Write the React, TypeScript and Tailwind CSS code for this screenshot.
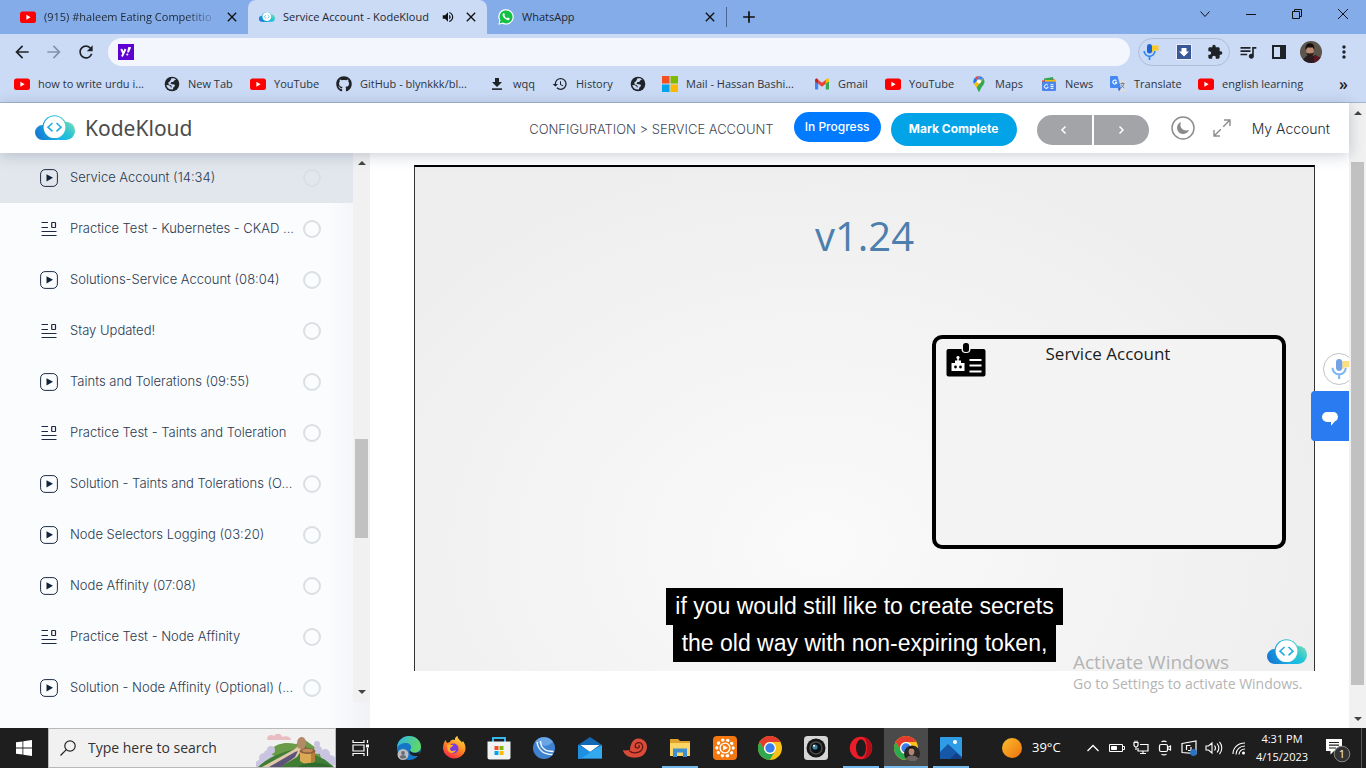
import type { ReactNode } from "react";
import {
  MdAdd,
  MdArrowBack,
  MdArrowForward,
  MdClose,
  MdExtension,
  MdHistory,
  MdMoreVert,
  MdQueueMusic,
  MdRefresh,
  MdVolumeUp,
} from "react-icons/md";
import { FaGithub } from "react-icons/fa";

function YouTubeIcon() {
  return (
    <svg viewBox="0 0 16 16" className="size-4 shrink-0">
      <rect x="0" y="2.5" width="16" height="11.5" rx="2.5" fill="#f00" />
      <path d="M6.4 5.8v5l4.2-2.5z" fill="#fff" />
    </svg>
  );
}

function GlobeIcon() {
  return (
    <svg viewBox="0 0 16 16" className="size-4 shrink-0">
      <circle cx="8" cy="8" r="7.300" fill="#1f2328" />
      <path d="M7.500 2.300c1.800-.4 3.500.2 4.500 1.200l-1.800 1-1 1.500H7.500L6.300 7.500 8 8.300l2.500.2.500 1.500-1.500 1.200-.7 2.300C6 14 3 12.300 2.300 9l2.700.2 1.700 1.300.3 1.500.8-1.200L7 9.300 4.700 8.500l-.4-2L6 5.300z" fill="#cbdbf5" />
    </svg>
  );
}

function WhatsAppIcon() {
  return (
    <svg viewBox="0 0 16 16" className="size-4 shrink-0">
      <path d="M.3 15.7 1.4 11.8A7.7 7.7 0 1 1 4.5 14.7z" fill="#fff" />
      <path d="M1.6 14.4l.9-3.1A6.5 6.5 0 1 1 4.9 13.6z" fill="#12c143" />
      <path
        d="M5.4 4.2c.3-.2.8-.1.9.2l.6 1.3c.1.3-.5.8-.5 1 .6 1.3 1.4 2 2.7 2.6.3 0 .7-.8 1-.7l1.4.7c.3.3 0 1.2-.6 1.6-.9.6-2.3.1-3.7-.8C5.600 9 4.500 7.400 4.500 6.100c0-.8.400-1.500.900-1.900z"
        fill="#fff"
      />
    </svg>
  );
}

function DownloadIcon() {
  return (
    <svg viewBox="0 0 16 16" className="size-4 shrink-0" fill="#1f2328">
      <path d="M6 2h4v4h3l-5 5-5-5h3z" />
      <rect x="3" y="12.300" width="10" height="1.600" />
    </svg>
  );
}

function MicrosoftIcon() {
  return (
    <svg viewBox="0 0 16 16" className="size-4 shrink-0">
      <rect width="7.500" height="7.500" fill="#f25022" />
      <rect x="8.500" width="7.500" height="7.500" fill="#7fba00" />
      <rect y="8.500" width="7.500" height="7.500" fill="#00a4ef" />
      <rect x="8.500" y="8.500" width="7.500" height="7.500" fill="#ffb900" />
    </svg>
  );
}

function GmailIcon() {
  return (
    <svg viewBox="0 0 16 16" className="size-4 shrink-0">
      <path d="M1 5v7.500c0 .6.400 1 1 1h2.200V6.500z" fill="#4285f4" />
      <path d="M15 5v7.500c0 .6-.400 1-1 1h-2.200V6.500z" fill="#34a853" />
      <path d="M11.800 3.800v4L15 5.400V4.200c0-1.500-1.700-2.100-2.600-1.300z" fill="#fbbc04" />
      <path d="M4.200 7.800v-4L8 6.700l3.800-2.900v4L8 10.700z" fill="#ea4335" />
      <path d="M1 4.200v1.200l3.200 2.400v-4l-.6-.9C2.700 2.100 1 2.700 1 4.200z" fill="#c5221f" />
    </svg>
  );
}

function MapsIcon() {
  return (
    <svg viewBox="0 0 16 16" className="size-4 shrink-0">
      <path d="M8 0a5.500 5.500 0 0 0-4.300 2L6.300 4.300z" fill="#ea4335" />
      <path d="M8 0a5.500 5.500 0 0 1 4.700 2.600L9.800 4.700 6.300 4.200z" fill="#4285f4" />
      <path d="M3.700 2A5.500 5.500 0 0 0 3 8l3.300-3.800z" fill="#1a73e8" />
      <path d="M3 8c.6 1.200 1.500 2 2.500 3.600L12 3.800l-4-.2z" fill="#fbbc04" />
      <path d="M5.500 11.600C6.700 13.300 7.300 16 8 16s1.300-2.700 2.500-4.400C12 9.500 13.500 8 13.500 5.500c0-1.100-.3-2-.8-2.900z" fill="#34a853" />
      <circle cx="8" cy="5.500" r="2" fill="#fff" />
    </svg>
  );
}

function NewsIcon() {
  return (
    <svg viewBox="0 0 16 16" className="size-4 shrink-0">
      <path d="M3 2.500 12 1l.8 4H3z" fill="#34a853" />
      <path d="M1 4.500 14 3.500V8H1z" fill="#ea4335" />
      <path d="M4 4h11v5H4z" fill="#fbbc04" />
      <rect x="1" y="5.500" width="14" height="9.500" rx="1.200" fill="#4a86ee" />
      <path d="M7 9.300a2 2 0 1 0 .2 2H5.600M9.500 8.700h3M9.500 10.500h3M9.500 12.300h3" fill="none" stroke="#fff" strokeWidth="1" />
    </svg>
  );
}

function TranslateIcon() {
  return (
    <svg viewBox="0 0 16 16" className="size-4 shrink-0">
      <path d="M6 4h9a1 1 0 0 1 1 1v10a1 1 0 0 1-1 1H9z" fill="#d9dde3" />
      <path d="M1 0h6.500l3.500 12H1a1 1 0 0 1-1-1V1a1 1 0 0 1 1-1z" fill="#4688f1" />
      <path d="M8 12h3l-2 3.500z" fill="#3367d6" />
      <path d="M6.500 4.800a2 2 0 1 0 .3 1.600H5" fill="none" stroke="#fff" strokeWidth="1.100" />
      <path d="M10.500 7.500h4M12.500 6.500v1M14 7.500c-.4 2-1.500 3.300-3 4.300M11.200 8.500c.6 1.600 1.800 2.700 3.200 3.500" fill="none" stroke="#66788e" strokeWidth=".9" />
    </svg>
  );
}

function KodeLogo({ id, className }: { id: string; className: string }) {
  return (
    <svg viewBox="0 0 40 26" className={className}>
      <defs>
        <linearGradient id={`${id}-a`} gradientUnits="userSpaceOnUse" x1="2" y1="22" x2="34" y2="6">
          <stop offset="0" stopColor="#1478d4" />
          <stop offset=".55" stopColor="#1cb5e0" />
          <stop offset="1" stopColor="#62d6c0" />
        </linearGradient>
        <linearGradient id={`${id}-b`} gradientUnits="userSpaceOnUse" x1="24" y1="25" x2="38" y2="9">
          <stop offset="0" stopColor="#16b4ea" />
          <stop offset=".5" stopColor="#26c4d4" />
          <stop offset="1" stopColor="#6ed9bb" />
        </linearGradient>
      </defs>
      <path d="M7.500 10H20v15H7.500a7.500 7.500 0 0 1 0-15z" fill={`url(#${id}-a)`} />
      <rect x="14" y="6.700" width="26" height="18.300" rx="9" fill={`url(#${id}-b)`} />
      <path d="M8 19h14v6H8z" fill={`url(#${id}-a)`} />
      <circle cx="19.500" cy="12.200" r="12" fill={`url(#${id}-a)`} />
      <circle cx="19.500" cy="12.200" r="10.900" fill="#fff" />
      <path d="m17.500 8-4.500 4.200 4.500 4.200M21.500 8l4.500 4.200-4.500 4.200" fill="none" stroke="#22aede" strokeWidth="1.600" />
    </svg>
  );
}

function MicIcon({ className }: { className: string }) {
  return (
    <svg viewBox="0 0 16 16" className={className}>
      <path d="M9 1.500h6.500v5H11l-2 2z" fill="#fbc926" />
      <rect x="4" y="0" width="5" height="9.500" rx="2.500" fill="#1a66d6" />
      <path d="M1.200 7a5.300 5.300 0 0 0 10.600 0M6.500 12.300V16" fill="none" stroke="#2f86ee" strokeWidth="1.700" />
    </svg>
  );
}

function Avatar({ className }: { className: string }) {
  return (
    <svg viewBox="0 0 22 22" className={className}>
      <circle cx="11" cy="11" r="11" fill="#5b554b" />
      <path d="M3 18.500a11 11 0 0 0 16.500-.6L16 14l-5 1.500-4-1z" fill="#2a1d22" />
      <path d="M14 14.500l6.800 1.700A11 11 0 0 1 14 21.500z" fill="#5d1826" />
      <ellipse cx="10" cy="9.500" rx="3.800" ry="5.200" fill="#b98a72" />
      <path d="M5.500 9C5 3.500 8 1.800 10.500 2.200c3 .2 4.300 2.600 3.600 6.800L13 6.500H7.500z" fill="#15100e" />
      <path d="M6.500 11.500c1 1.200 5.500 1.200 7 0-.2 3-1.500 4.500-3.500 4.500s-3.200-1.500-3.500-4.500z" fill="#2b1c18" />
    </svg>
  );
}

const iconMd = "size-4 shrink-0 text-[#1f2328]";

type Bookmark = { icon: ReactNode; label: string; width: string };

const bookmarks: Bookmark[] = [
  { icon: <YouTubeIcon />, label: "how to write urdu i...", width: "w-[150px]" },
  { icon: <GlobeIcon />, label: "New Tab", width: "w-[86px]" },
  { icon: <YouTubeIcon />, label: "YouTube", width: "w-[86px]" },
  { icon: <FaGithub className={iconMd} />, label: "GitHub - blynkkk/bl...", width: "w-[153px]" },
  { icon: <DownloadIcon />, label: "wqq", width: "w-[63px]" },
  { icon: <MdHistory className={iconMd} />, label: "History", width: "w-[78px]" },
  { icon: <GlobeIcon />, label: "", width: "w-8" },
  { icon: <MicrosoftIcon />, label: "Mail - Hassan Bashi...", width: "w-[152px]" },
  { icon: <GmailIcon />, label: "Gmail", width: "w-[71px]" },
  { icon: <YouTubeIcon />, label: "YouTube", width: "w-[86px]" },
  { icon: <MapsIcon />, label: "Maps", width: "w-[70px]" },
  { icon: <NewsIcon />, label: "News", width: "w-[69px]" },
  { icon: <TranslateIcon />, label: "Translate", width: "w-[88px]" },
  { icon: <YouTubeIcon />, label: "english learning", width: "w-[120px]" },
];

function TabStrip() {
  return (
    <div className="flex h-[34px] items-center bg-[#84ace9] text-[11px] text-[#1c2733]">
      <div className="flex h-full w-[248px] items-center pl-5 pr-2">
        <YouTubeIcon />
        <span className="ml-2 w-[176px] whitespace-nowrap bg-linear-to-r from-[#1c2733] from-80% to-[#84ace9] bg-clip-text text-transparent">
          (915) #haleem Eating Competitio
        </span>
        <button aria-label="Close tab" className="ml-1">
          <MdClose className="size-4 text-[#111]" />
        </button>
      </div>
      <div className="flex h-full w-[239px] items-center rounded-t-lg bg-[#cbdbf5] pl-[11px] pr-2">
        <KodeLogo id="tab" className="h-3 w-4 shrink-0" />
        <span className="ml-2 w-[154px] whitespace-nowrap">Service Account - KodeKloud</span>
        <MdVolumeUp className="ml-1 size-3.5 shrink-0 text-[#111]" />
        <button aria-label="Close tab" className="ml-auto">
          <MdClose className="size-4 text-[#111]" />
        </button>
      </div>
      <div className="flex h-full w-[239px] items-center pl-[11px] pr-2">
        <WhatsAppIcon />
        <span className="ml-2">WhatsApp</span>
        <button aria-label="Close tab" className="ml-auto">
          <MdClose className="size-4 text-[#111]" />
        </button>
      </div>
      <span className="h-5 w-px bg-[#4a6690]" />
      <button aria-label="New tab" className="ml-3">
        <MdAdd className="size-5 text-[#111]" />
      </button>
      <div className="ml-auto flex h-7 self-start">
        <button aria-label="Search tabs" className="flex w-[46px] items-center justify-center">
          <svg viewBox="0 0 10 10" className="size-2.5" fill="none" stroke="#111">
            <path d="m.5 2.500 4.500 5 4.500-5" />
          </svg>
        </button>
        <button aria-label="Minimize" className="flex w-[46px] items-center justify-center">
          <svg viewBox="0 0 10 10" className="size-2.5" stroke="#111">
            <path d="M0 5.500h10" />
          </svg>
        </button>
        <button aria-label="Restore" className="flex w-[46px] items-center justify-center">
          <svg viewBox="0 0 10 10" className="size-2.5" fill="none" stroke="#111">
            <path d="M.5 2.500h7v7h-7zM2.500 2.500v-2h7v7h-2" />
          </svg>
        </button>
        <button aria-label="Close window" className="flex w-[46px] items-center justify-center">
          <svg viewBox="0 0 10 10" className="size-2.5" stroke="#111">
            <path d="m0 0 10 10M10 0 0 10" />
          </svg>
        </button>
      </div>
    </div>
  );
}

function Toolbar() {
  return (
    <div className="flex h-9 items-center bg-[#cbdbf5]">
      <button aria-label="Back" className="ml-3">
        <MdArrowBack className="size-5 text-[#1f2328]" />
      </button>
      <button aria-label="Forward" className="ml-3">
        <MdArrowForward className="size-5 text-[#8493ad]" />
      </button>
      <button aria-label="Reload" className="ml-3">
        <MdRefresh className="size-5 text-[#1f2328]" />
      </button>
      <div className="ml-3 flex h-7 flex-1 items-center rounded-full bg-[#f3f7fd] px-2.5">
        <svg viewBox="0 0 16 16" className="size-4 shrink-0">
          <rect width="16" height="16" fill="#5f01d1" />
          <path d="m3.200 5 2.200 4.500L7.500 5M5.500 9.200l-1.500 3.300" fill="none" stroke="#fff" strokeWidth="1.900" />
          <path d="m10.300 3 2.900.2-2.300 5.300-1.800-.2z" fill="#fff" />
          <circle cx="9.300" cy="10.500" r="1.100" fill="#fff" />
        </svg>
        <input aria-label="Address" className="ml-2 h-6 min-w-0 flex-1 bg-transparent text-sm outline-none" />
      </div>
      <div className="ml-2 flex h-7 w-[92px] items-center justify-between rounded-full border border-[#aebdd8] pl-1 pr-1.5">
        <button aria-label="Voice typing">
          <MicIcon className="size-4" />
        </button>
        <button aria-label="Video downloader" className="ml-0.5">
          <svg viewBox="0 0 16 16" className="size-4">
            <rect x=".5" y=".5" width="15" height="15" fill="#3a5797" stroke="#e8eefa" />
            <path d="M5.500 4h5v3.500H13l-5 5-5-5h2.500z" fill="#fff" />
          </svg>
        </button>
        <button aria-label="Extensions">
          <MdExtension className="size-4 text-[#1f2328]" />
        </button>
      </div>
      <button aria-label="Media controls" className="ml-2">
        <MdQueueMusic className="size-5 text-[#1f2328]" />
      </button>
      <button aria-label="Side panel" className="ml-3.5">
        <svg viewBox="0 0 14 14" className="size-3.5">
          <rect x="1" y="1" width="12" height="12" fill="none" stroke="#1f2328" strokeWidth="2" />
          <rect x="8" y="1" width="5" height="12" fill="#1f2328" />
        </svg>
      </button>
      <button aria-label="Profile" className="ml-3.5">
        <Avatar className="size-[22px]" />
      </button>
      <button aria-label="Menu" className="ml-3 mr-3">
        <MdMoreVert className="size-5 text-[#1f2328]" />
      </button>
    </div>
  );
}

function BookmarkBar() {
  return (
    <nav className="flex h-[33px] items-center overflow-hidden border-b border-[#a3b3cf] bg-[#cbdbf5] pb-1 pl-3.5 text-[11px] text-[#2b3440]">
      {bookmarks.map((b, i) => (
        <a
          key={i}
          href="#bookmark"
          aria-label={b.label || "Bookmark"}
          className={`flex shrink-0 items-center gap-2 whitespace-nowrap ${b.width}`}
        >
          {b.icon}
          {b.label}
        </a>
      ))}
      <button aria-label="More bookmarks" className="ml-auto mr-[18px] text-base leading-none font-semibold text-[#1f2328]">
        »
      </button>
    </nav>
  );
}

function PageHeader() {
  return (
    <header className="relative z-10 flex h-[50px] shrink-0 items-center bg-white shadow-[0_2px_14px_rgba(40,55,90,0.25)]">
      <a href="#home" className="ml-[35px] flex items-center gap-2.5">
        <KodeLogo id="head" className="h-[26px] w-10" />
        <span className="font-['Noto_Sans',sans-serif] text-[21px] leading-6 text-[#4b4b4b]">KodeKloud</span>
      </a>
      <span className="ml-auto mt-1 text-[13px] font-light whitespace-nowrap text-[#3f4854]">
        CONFIGURATION &gt; SERVICE ACCOUNT
      </span>
      <button className="mb-0.5 ml-5 h-[30px] w-[87px] rounded-full bg-[#007bff] text-xs font-medium text-white">
        In Progress
      </button>
      <button className="ml-2.5 mt-0.5 h-[33px] w-[126px] rounded-full bg-[#03a3e8] text-xs font-bold text-white">
        Mark Complete
      </button>
      <div className="ml-5 mt-1 flex gap-0.5">
        <button aria-label="Previous" className="flex h-[30px] w-[55px] items-center justify-center rounded-l-full bg-[#a3a4a8]">
          <svg viewBox="0 0 8 10" className="h-2.5 w-2" fill="none" stroke="#fff" strokeWidth="1.500">
            <path d="M5.500 1.500 2 5l3.500 3.500" />
          </svg>
        </button>
        <button aria-label="Next" className="flex h-[30px] w-[55px] items-center justify-center rounded-r-full bg-[#a3a4a8]">
          <svg viewBox="0 0 8 10" className="h-2.5 w-2" fill="none" stroke="#fff" strokeWidth="1.500">
            <path d="M2.500 1.500 6 5 2.500 8.500" />
          </svg>
        </button>
      </div>
      <button aria-label="Dark mode" className="ml-[22px]">
        <svg viewBox="0 0 24 24" className="size-6">
          <circle cx="12" cy="12" r="11" fill="#fff" stroke="#8d8d8d" strokeWidth="1.500" />
          <path d="M10 6a6.200 6.200 0 1 0 8 8c-3 1-5.500.3-7-1.200C9.300 11.200 9 8.500 10 6z" fill="#8a8a8c" />
        </svg>
      </button>
      <button aria-label="Full screen" className="ml-[18px]">
        <svg viewBox="0 0 18 18" className="size-[18px]" fill="none" stroke="#8d8d8d" strokeWidth="1.400">
          <path d="M11 1h6v6M17 1l-6.800 6.800M7 17H1v-6M1 17l6.800-6.800" />
        </svg>
      </button>
      <a href="#account" className="ml-[21px] mr-[19px] mt-0.5 text-sm font-light whitespace-nowrap text-[#222b38]">
        My Account
      </a>
    </header>
  );
}

type Lesson = { kind: "video" | "text"; title: string };

const lessons: Lesson[] = [
  { kind: "video", title: "Service Account (14:34)" },
  { kind: "text", title: "Practice Test - Kubernetes - CKAD ..." },
  { kind: "video", title: "Solutions-Service Account (08:04)" },
  { kind: "text", title: "Stay Updated!" },
  { kind: "video", title: "Taints and Tolerations (09:55)" },
  { kind: "text", title: "Practice Test - Taints and Toleration" },
  { kind: "video", title: "Solution - Taints and Tolerations (O..." },
  { kind: "video", title: "Node Selectors Logging (03:20)" },
  { kind: "video", title: "Node Affinity (07:08)" },
  { kind: "text", title: "Practice Test - Node Affinity" },
  { kind: "video", title: "Solution - Node Affinity (Optional) (..." },
];

function LessonIcon({ kind }: { kind: Lesson["kind"] }) {
  return kind === "video" ? (
    <svg viewBox="0 0 18 18" className="size-[18px] shrink-0">
      <rect x=".6" y=".6" width="16.800" height="16.800" rx="4.500" fill="none" stroke="#1d2b42" strokeWidth="1" />
      <path d="M6.500 5.200v7.200L13 8.800z" fill="#14233c" />
    </svg>
  ) : (
    <svg viewBox="0 0 18 18" className="size-[18px] shrink-0" fill="none" stroke="#1d2b42" strokeWidth="1.200">
      <path d="M1.500 2.500H8M1.500 7.500H8M1.500 11.500h15M1.500 15.500h15" />
      <rect x="11.700" y="2.500" width="3.800" height="5" rx=".5" />
    </svg>
  );
}

function ScrollArrow({ down = false }: { down?: boolean }) {
  return (
    <svg viewBox="0 0 8 4" className="h-1 w-2" fill="#444">
      <path d={down ? "M0 0h8L4 4z" : "M0 4h8L4 0z"} />
    </svg>
  );
}

function Sidebar() {
  return (
    <aside className="flex w-[370px] shrink-0 items-start overflow-hidden bg-[linear-gradient(to_right,#fafcfe_88%,#f0f2f5)]">
      <ul className="min-w-0 flex-1">
        {lessons.map((lesson, i) => (
          <li
            key={lesson.title}
            className={
              i === 0
                ? "flex h-[50px] items-center bg-[#e2e7ed] pl-10 pr-8"
                : "flex h-[51px] items-center pl-10 pr-8"
            }
          >
            <LessonIcon kind={lesson.kind} />
            <a href="#lesson" className="ml-3 truncate text-[13px] font-light text-[#2b394f]">
              {lesson.title}
            </a>
            <input
              type="checkbox"
              aria-label={`Mark ${lesson.title} complete`}
              className="ml-auto size-[18px] shrink-0 appearance-none rounded-full border-2 border-[#dcdfe2]"
            />
          </li>
        ))}
      </ul>
      <div className="flex h-[549px] w-[17px] shrink-0 flex-col items-center bg-[#f1f1f1] py-2">
        <ScrollArrow />
        <div className="mt-[274px] h-[99px] w-[13px] bg-[#c1c1c1]" />
        <div className="mt-auto">
          <ScrollArrow down />
        </div>
      </div>
    </aside>
  );
}

function Slide() {
  return (
    <div className="relative flex aspect-[901/506] flex-col border-x border-t-2 border-x-[#333] border-t-black bg-[radial-gradient(ellipse_at_45%_75%,#fafafa,#eeeeee_75%)] font-['Open_Sans',sans-serif]">
      <h1 className="mt-[46px] text-center text-[40px] leading-[46px] text-[#4d7fac]">v1.24</h1>
      <div className="mr-7 mt-[76px] flex h-[214px] w-[354px] items-start self-end rounded-[10px] border-4 border-black bg-[#f3f3f3]">
        <svg viewBox="0 0 40 34" className="ml-2.5 mt-1 h-[34px] w-10 shrink-0">
          <rect x=".5" y="6" width="39" height="27.500" rx="2" fill="#000" />
          <rect x="15.500" y="-1" width="9" height="11" rx="4" fill="#f4f4f4" />
          <rect x="17" y="0" width="6" height="9" rx="2.500" fill="#000" />
          <path d="M5.500 20h13v8h-13zM9 17.500h6V21H9zM11.300 13.500h1.500v5h-1.500z" fill="#fff" />
          <circle cx="12" cy="14.500" r="1.600" fill="#fff" />
          <circle cx="9.500" cy="24" r="1.400" fill="#000" />
          <circle cx="14.500" cy="24" r="1.400" fill="#000" />
          <path d="M23.500 17h12M23.500 22.500h12M23.500 28.500h12" stroke="#fff" strokeWidth="1.800" />
        </svg>
        <h2 className="mt-[3px] flex-1 pr-[52px] text-center text-[17px] leading-6 text-[#1b1b1b]">Service Account</h2>
      </div>
      <div className="absolute inset-x-0 bottom-[9px] flex flex-col items-center font-['Liberation_Sans',Arial,sans-serif] text-[23px] leading-[37px] text-white">
        <span className="bg-black px-[9px]">if you would still like to create secrets</span>
        <span className="bg-black px-[9px]">the old way with non-expiring token,</span>
      </div>
      <KodeLogo id="slide" className="absolute bottom-1.5 right-[7px] h-[26px] w-10" />
      <div className="absolute right-1 top-[483px] w-[237px] whitespace-nowrap text-[#b4b4b4]">
        <p className="text-[19px] leading-6">Activate Windows</p>
        <p className="text-sm leading-5">Go to Settings to activate Windows.</p>
      </div>
    </div>
  );
}

function Page() {
  return (
    <div className="relative flex min-w-0 flex-1 flex-col bg-white">
      <PageHeader />
      <div className="flex min-h-0 flex-1">
        <Sidebar />
        <main className="min-w-0 flex-1 pl-11 pr-[34px] pt-3">
          <Slide />
        </main>
      </div>
      <div className="absolute right-0 top-[250px] flex flex-col items-end overflow-hidden">
        <button
          aria-label="Voice input"
          className="-mr-1.5 flex size-8 items-center justify-center rounded-full border border-[#c4c4c4] bg-white pl-1"
        >
          <MicIcon className="size-5 opacity-60" />
        </button>
        <button aria-label="Chat" className="mt-1.5 flex h-[50px] w-[38px] items-center justify-center rounded-l bg-[#2a7af2]">
          <svg viewBox="0 0 16 14" className="mt-1.5 h-3.5 w-4" fill="#fff">
            <path d="M5 0h6a4.800 4.800 0 0 1 2 9.200L9 13.800V10H5A5 5 0 0 1 5 0z" />
          </svg>
        </button>
      </div>
    </div>
  );
}

function PageScrollbar() {
  return (
    <div className="flex w-[17px] shrink-0 flex-col items-center bg-[#f1f1f1] pb-[7px] pt-2">
      <ScrollArrow />
      <div className="mb-8 mt-[47px] w-[13px] flex-1 bg-[#c1c1c1]" />
      <ScrollArrow down />
    </div>
  );
}

function WallArt() {
  return (
    <svg viewBox="0 0 79 36" className="h-9 w-[79px] shrink-0 self-end">
      <path d="M11 8c0-4 5-5 7-3 3-4 8-2 8 1 4-2 9 0 9 3H12z" fill="#e8bcc0" />
      <path d="M14 19c8-7 15-8 26-6l9-4 14 10 4 14H8z" fill="#6b9a48" />
      <g fill="#c9c4e0">
        <circle cx="8" cy="27" r="5" />
        <circle cx="15" cy="19" r="4" />
        <circle cx="4" cy="34" r="5" />
        <circle cx="12" cy="23" r="4" />
        <circle cx="16" cy="28" r="4" />
        <circle cx="62" cy="19" r="4" />
        <circle cx="69" cy="23" r="5" />
        <circle cx="74" cy="30" r="6" />
        <circle cx="61" cy="13" r="3" />
      </g>
      <path d="M2 36c10-9 18-13 34-17l12-6 6 9 14 6 10 8z" fill="#3f7d35" />
      <path d="M6 36 37 19l7-5 3 3-6 9-17 10z" fill="#e0c8a8" />
      <path d="M13 36 39 21l3-1-3 6-14 10z" fill="#5c5478" />
      <path d="M41 13c0-5 2-7 5-7s4 4 4 7l-2 6-6-2z" fill="#b38a68" />
      <path d="M44 20h15v10c-4 4-11 4-15 0z" fill="#dba855" />
      <path d="M55 19h4v11l-4 2z" fill="#b87f3c" />
      <ellipse cx="51.500" cy="20" rx="8" ry="3" fill="#8d5f3d" />
      <ellipse cx="51.500" cy="19.500" rx="5.500" ry="1.800" fill="#c28c59" />
      <path d="M42 36c6-5 24-6 34 0z" fill="#2f6b2d" />
    </svg>
  );
}

function ChromeIcon({ className, children }: { className: string; children?: ReactNode }) {
  return (
    <svg viewBox="0 0 24 24" className={className}>
      <circle cx="12" cy="12" r="12" fill="#fbc116" />
      <path d="M1.600 6A12 12 0 0 1 22.400 6H12a6 6 0 0 0-5.200 9z" fill="#e33b2e" />
      <path d="M1.600 6a12 12 0 0 0 10.200 18l5.400-9a6 6 0 0 1-10.400 0z" fill="#2da94f" />
      <circle cx="12" cy="12" r="6" fill="#fff" />
      <circle cx="12" cy="12" r="4.700" fill="#3b7ded" />
      {children}
    </svg>
  );
}

type TaskApp = { name: string; icon: ReactNode; state?: "open" | "active" };

const taskIcon = "size-6";

const apps: TaskApp[] = [
  {
    name: "Edge",
    icon: (
      <svg viewBox="0 0 24 24" className={taskIcon}>
        <defs>
          <linearGradient id="edge" x1="0" y1="0" x2="1" y2=".3">
            <stop offset="0" stopColor="#2fb5e8" />
            <stop offset="1" stopColor="#5fd669" />
          </linearGradient>
        </defs>
        <circle cx="12" cy="12" r="12" fill="#1676c6" />
        <path d="M0 11.500C.5 4.500 6 0 12 0c7 0 12 5 12 10.500 0 4-3 6-6.500 6-3 0-4.500-1.300-4.500-2.300 0-.8 1.200-1.200 1.200-3 0-2-2-4.200-5.500-4.200C5 7 1.500 8.700 0 11.500z" fill="url(#edge)" />
        <path d="M13 14.200c0 1 1.500 2.800 5 2.800 2 0 4-1 5-2l-1 5c-5 .5-11-1-9-5.800z" fill="#1e1e1e" />
        <circle cx="6" cy="18.500" r="5.500" fill="#b9bcc0" />
        <circle cx="6" cy="17" r="1.900" fill="#6a6d71" />
        <path d="M2.800 21.500c.4-3.200 6-3.200 6.400 0-1.600 1.500-4.800 1.500-6.400 0z" fill="#6a6d71" />
      </svg>
    ),
  },
  {
    name: "Firefox",
    icon: (
      <svg viewBox="0 0 24 24" className={taskIcon}>
        <defs>
          <linearGradient id="fox" x1=".8" y1="0" x2=".3" y2="1">
            <stop offset="0" stopColor="#ffe14b" />
            <stop offset=".5" stopColor="#ff8a1e" />
            <stop offset="1" stopColor="#f5254e" />
          </linearGradient>
        </defs>
        <path d="M1 13c0-4 1-7 2.500-9l1.500 3 3-1c1-3 4-2 5-2-.5-2 1-3.500 2.500-4 0 3 3 4 4.500 6.500L21 5c2 3 3 6 2.300 9.500A11.500 11.500 0 0 1 1 13z" fill="url(#fox)" />
        <circle cx="11.500" cy="12.500" r="5" fill="#7a3be0" />
        <path d="M5 9c2-1.500 4 .5 6.500 0-1 2-3.500 2-3.500 4 0 2 3 3 6 1-1.500 4-7 4-8.500 0z" fill="#ffb12b" />
      </svg>
    ),
  },
  {
    name: "Store",
    icon: (
      <svg viewBox="0 0 24 24" className={taskIcon}>
        <path d="M6 6V2h12v4" fill="none" stroke="#38b6ee" strokeWidth="2" />
        <path d="M.5 5.500h23v16a2 2 0 0 1-2 2h-19a2 2 0 0 1-2-2z" fill="#f0f2f4" />
        <path d="M7.500 10h4v4h-4z" fill="#f25022" />
        <path d="M12.500 10h4v4h-4z" fill="#7fba00" />
        <path d="M7.500 15h4v4h-4z" fill="#00a4ef" />
        <path d="M12.500 15h4v4h-4z" fill="#ffb900" />
      </svg>
    ),
  },
  {
    name: "Connect",
    icon: (
      <svg viewBox="0 0 24 24" className={taskIcon}>
        <circle cx="12" cy="12" r="11" fill="#3f83d0" />
        <path d="M3 6a11 11 0 0 1 18 0 16 16 0 0 1-8 4z" fill="#6aa5e6" />
        <path d="M5 6c1 7 6 12.500 15.500 12.500M8.500 5c0 6 4 10.500 13 10.500" fill="none" stroke="#f2f8ff" strokeWidth="1.500" />
      </svg>
    ),
  },
  {
    name: "Mail",
    icon: (
      <svg viewBox="0 0 24 24" className={taskIcon}>
        <path d="M0 9 12 1l12 8v13.500H0z" fill="#1467b3" />
        <path d="M2.500 9h19L12 16z" fill="#fff" />
        <path d="m0 9 12 7L24 9v13.500H0z" fill="#33aaf0" />
        <path d="M0 9v13.500h3L16 14l-4 2z" fill="#1f8fe0" />
      </svg>
    ),
  },
  {
    name: "Nautilus",
    icon: (
      <svg viewBox="0 0 24 24" className={taskIcon}>
        <path d="M0 14c2 1 4 0 7 .5C7 7 11 2 16 2.500c5 .5 8 4 8 8.500-.5 6.500-5 10.500-11 10.500C6 22 1 19 0 14z" fill="#db4a38" />
        <path d="M6.500 15c3 3 10 2.500 12.500-1.500 2-4-.5-7.500-4-6.800-3.500.8-3.800 4.800-1 5.300 2.300.3 3.200-2 1.500-2.800" fill="none" stroke="#5a1712" strokeWidth="1.200" />
      </svg>
    ),
  },
  {
    name: "File Explorer",
    state: "open",
    icon: (
      <svg viewBox="0 0 24 24" className={taskIcon}>
        <path d="M2 3h8l2 2h10v5H2z" fill="#e0a22c" />
        <path d="M2 7h20v13H2z" fill="#fbd566" />
        <path d="M5 21v-8.500h14V21h-4v-4.500H9V21z" fill="#3d8fd0" />
      </svg>
    ),
  },
  {
    name: "Photo studio",
    icon: (
      <svg viewBox="0 0 24 24" className={taskIcon}>
        <rect width="24" height="24" rx="4" fill="#f4780f" />
        <circle cx="12" cy="12" r="8" fill="none" stroke="#fff" strokeWidth="3.600" strokeLinecap="round" strokeDasharray="0 5.026" />
        <circle cx="12" cy="12" r="6.400" fill="none" stroke="#f4780f" strokeWidth=".8" />
        <circle cx="12" cy="12" r="5.600" fill="#fff" />
        <circle cx="12" cy="12" r="4.200" fill="#f4780f" />
        <path d="M10 9v5.600l5-2.800z" fill="#fff" />
      </svg>
    ),
  },
  { name: "Chrome", icon: <ChromeIcon className={taskIcon} /> },
  {
    name: "Camera",
    icon: (
      <svg viewBox="0 0 24 24" className={taskIcon}>
        <rect width="24" height="24" rx="3.500" fill="#d6d6d6" />
        <circle cx="12" cy="12" r="9.500" fill="#161616" />
        <circle cx="12" cy="12" r="6.800" fill="#4a4a4e" />
        <circle cx="12" cy="12" r="5.200" fill="#0a0f16" />
        <circle cx="11" cy="11" r="2.600" fill="#3f7f9b" />
        <circle cx="10" cy="9.800" r="1" fill="#fff" />
      </svg>
    ),
  },
  {
    name: "Opera",
    state: "open",
    icon: (
      <svg viewBox="0 0 24 24" className={taskIcon}>
        <circle cx="12" cy="12" r="11.200" fill="#ee1c28" />
        <path d="M14 1a11.200 11.200 0 0 1 0 22c5-3 6-19 0-22z" fill="#b00f1a" />
        <ellipse cx="12" cy="12" rx="5" ry="8.800" fill="#1e1e1e" />
      </svg>
    ),
  },
  {
    name: "Chrome profile",
    state: "active",
    icon: (
      <ChromeIcon className="size-6 overflow-visible">
        <circle cx="18" cy="17.500" r="8" fill="#2c2725" />
        <ellipse cx="17.500" cy="15.500" rx="2.800" ry="3.800" fill="#b08672" />
        <path d="M14.500 14c0-4.500 6-4.500 6 0l-1-1.500h-4z" fill="#0f0c0b" />
        <path d="M12 22.500c2-4 10-4 12.500 0a8 8 0 0 1-12.500 0z" fill="#6b6462" />
      </ChromeIcon>
    ),
  },
  {
    name: "Photos",
    state: "open",
    icon: (
      <svg viewBox="0 0 22 22" className="size-[22px]">
        <rect width="22" height="22" rx="1" fill="#2f9ce8" />
        <path d="m0 15 8-8 14 13v2H0z" fill="#1558a8" />
        <path d="m10 22 6-6 6 5v1z" fill="#123f86" />
        <circle cx="15" cy="5" r="2" fill="#fff" />
      </svg>
    ),
  },
];

function Tray() {
  const cls = "size-4 shrink-0";
  return (
    <div className="flex items-center gap-2" aria-hidden="true">
      <svg viewBox="0 0 16 16" className={cls} fill="none" stroke="#fff" strokeWidth="1.300">
        <path d="m2.500 11 5.500-5.500 5.500 5.500" />
      </svg>
      <svg viewBox="0 0 16 16" className={cls} fill="none" stroke="#fff">
        <path d="M.5 4.500h13v7H.5zM14 6.500h1.500v3H14" />
        <path d="M2.500 6.500h5v3h-5z" fill="#fff" />
      </svg>
      <svg viewBox="0 0 16 16" className={cls} fill="none" stroke="#fff" strokeWidth="1.200">
        <path d="M7 4.500h8v6.500H5V8M10 11v2.500M7 13.500h6M1 2.500V5c0 1 1 2 2 2s2-1 2-2V2.500zM2 2.500V.8M4 2.500V.8M3 7v3" />
      </svg>
      <svg viewBox="0 0 16 16" className={cls} fill="none" stroke="#fff" strokeWidth="1.200">
        <rect x="2.500" y="4.500" width="8" height="7" rx="1.500" />
        <path d="m10.500 7.500 3-1.500v4l-3-1.500M4.500 1.800c1.500-.8 3.500-.8 5 0M4.500 14.200c1.500.8 3.500.8 5 0" />
      </svg>
      <svg viewBox="0 0 16 16" className={cls} fill="none" stroke="#fff" strokeWidth="1.200">
        <path d="M1 3.500 15 1v12.500L1 12.500zM5.500 10V5.500h4M7 10.500h3V7" />
        <circle cx="12.500" cy="12.500" r="3.400" fill="#2a74c2" stroke="none" />
      </svg>
      <svg viewBox="0 0 18 16" className="h-4 w-[18px] shrink-0" fill="none" stroke="#fff" strokeWidth="1.100">
        <path d="M1 6v4h2.500L7 13V3L3.500 6zM9.500 5.500c1.200 1.500 1.200 3.500 0 5M12 3.500c2.300 2.800 2.300 6.200 0 9M14.500 1.800c3 3.600 3 8.800 0 12.400" />
      </svg>
      <svg viewBox="0 0 16 16" className={cls} fill="none" stroke="#fff" strokeWidth="1.100">
        <path d="M2 14C2 7.500 7 3 14 3M5 14.500c0-5 4-8.500 9-8.500M8 14.500C8 11.500 10.500 9 14 9" />
        <circle cx="12.500" cy="13" r="1.500" fill="#fff" stroke="none" />
      </svg>
    </div>
  );
}

function Taskbar() {
  return (
    <footer className="flex h-10 shrink-0 items-stretch bg-[#1e1e1e] text-white">
      <button aria-label="Start" className="flex w-12 items-center justify-center">
        <svg viewBox="0 0 16 16" className="size-4" fill="#fff">
          <path d="m0 2.300 6.500-.9v6.200H0zM7.300 1.300 16 0v7.600H7.300zM0 8.400h6.500v6.200L0 13.700zM7.300 8.400H16V16l-8.700-1.300z" />
        </svg>
      </button>
      <div className="flex w-[288px] items-center border border-[#b9b9b9] bg-[#f1f1f1] pl-[11px]">
        <svg viewBox="0 0 16 16" className="size-4 shrink-0" fill="none" stroke="#222" strokeWidth="1.200">
          <circle cx="10" cy="6" r="5.200" />
          <path d="M6.300 9.700.5 15.500" />
        </svg>
        <input
          aria-label="Search"
          placeholder="Type here to search"
          className="ml-3 w-0 min-w-0 flex-1 bg-transparent text-sm text-[#333] outline-none placeholder:text-[#333]"
        />
        <WallArt />
      </div>
      <button aria-label="Task view" className="flex w-[50px] items-center justify-center">
        <svg viewBox="0 0 18 16" className="h-4 w-[18px]" fill="none" stroke="#fff" strokeWidth="1.200">
          <path d="M1 0v2.500h11V0M1 16v-2.500h11V16M1 5h11v6H1zM15.500 0v3M15.500 8v8" />
          <path d="M14 4.500h3v3h-3z" fill="#fff" stroke="none" />
        </svg>
      </button>
      <div className="flex w-[588px]">
        {apps.map((app) => (
          <button key={app.name} aria-label={app.name} className="flex flex-1 justify-center">
            <span
              className={
                app.state === "active"
                  ? "flex h-full w-11 items-center justify-center border-y-2 border-t-[#4a4a4a] border-b-[#76b9ed] bg-[#4a4a4a]"
                  : app.state === "open"
                    ? "flex h-full w-9 items-center justify-center border-y-2 border-t-transparent border-b-[#76b9ed]"
                    : "flex h-full w-9 items-center justify-center"
              }
            >
              {app.icon}
            </span>
          </button>
        ))}
      </div>
      <div className="ml-auto flex items-center">
        <svg viewBox="0 0 20 20" className="size-5">
          <defs>
            <linearGradient id="sun" x1="0" y1="0" x2="1" y2="1">
              <stop offset="0" stopColor="#f9bf2c" />
              <stop offset="1" stopColor="#f0700f" />
            </linearGradient>
          </defs>
          <circle cx="10" cy="10" r="10" fill="url(#sun)" />
        </svg>
        <span className="ml-2.5 w-[53px] text-[13px]">39°C</span>
        <Tray />
        <div className="w-[70px] text-center text-[11px] leading-[18px]">
          <div>4:31 PM</div>
          <div>4/15/2023</div>
        </div>
        <button aria-label="Notifications" className="ml-2 mr-2.5 mt-1">
          <svg viewBox="0 0 26 26" className="size-[26px]">
            <path d="M1 2h16v12H9l-3.500 3.500V14H1z" fill="#fff" />
            <path d="M4 5.500h10M4 8.200h10M4 11h7" stroke="#1e1e1e" strokeWidth="1.200" />
            <circle cx="17" cy="17" r="7.800" fill="#333" stroke="#888" />
            <text x="17" y="21" textAnchor="middle" fontSize="11" fill="#fff">
              1
            </text>
          </svg>
        </button>
        <span className="mr-1 h-10 w-px bg-[#555]" />
      </div>
    </footer>
  );
}

export default function App() {
  return (
    <div className="flex h-screen flex-col overflow-hidden bg-white font-['Open_Sans','Noto_Sans',sans-serif]">
      <TabStrip />
      <Toolbar />
      <BookmarkBar />
      <div className="flex min-h-0 flex-1 font-[Inter,sans-serif]">
        <Page />
        <PageScrollbar />
      </div>
      <Taskbar />
    </div>
  );
}
